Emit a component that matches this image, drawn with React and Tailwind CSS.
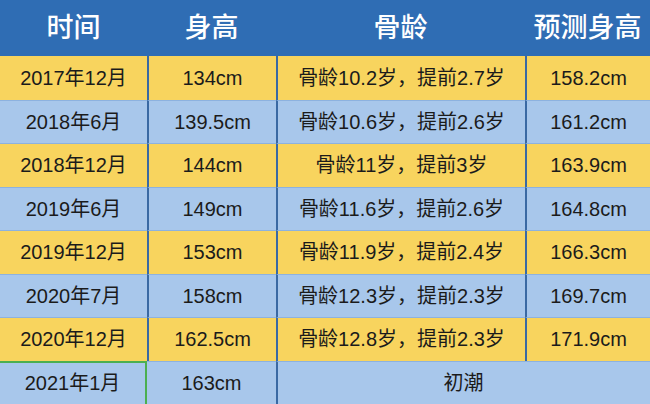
import React from "react";

const rows = [
  ["2017年12月", "134cm", "骨龄10.2岁，提前2.7岁", "158.2cm"],
  ["2018年6月", "139.5cm", "骨龄10.6岁，提前2.6岁", "161.2cm"],
  ["2018年12月", "144cm", "骨龄11岁，提前3岁", "163.9cm"],
  ["2019年6月", "149cm", "骨龄11.6岁，提前2.6岁", "164.8cm"],
  ["2019年12月", "153cm", "骨龄11.9岁，提前2.4岁", "166.3cm"],
  ["2020年7月", "158cm", "骨龄12.3岁，提前2.3岁", "169.7cm"],
  ["2020年12月", "162.5cm", "骨龄12.8岁，提前2.3岁", "171.9cm"],
];

const headers = ["时间", "身高", "骨龄", "预测身高"];

export default function App() {
  return (
    <div
      className="w-[650px] h-[404px] overflow-hidden bg-[#a8c7eb] text-[#1b1b1b]"
      style={{ fontFamily: '"Liberation Sans", "Noto Sans CJK SC", sans-serif' }}
    >
      <div className="grid grid-cols-[147px_129px_249px_125px]">
        {headers.map((h) => (
          <div
            key={h}
            className="h-[56px] bg-[#2f6db4] text-white text-[27px] font-medium flex items-center justify-center"
          >
            {h}
          </div>
        ))}

        {rows.map((r, i) => {
          const bg = i % 2 === 0 ? "bg-[#f8d45e]" : "bg-[#a8c7eb]";
          const top = i === 0 ? "" : "border-t border-[#8db2df]";
          return r.map((c, j) => (
            <div
              key={i + "-" + j}
              className={`h-[43.5px] ${bg} ${top} ${j > 0 ? "border-l-2 border-l-[#3a69a3]" : ""} text-[20px] flex items-center justify-center`}
            >
              {c}
            </div>
          ));
        })}

        <div className="h-[43.5px] border-t-2 border-t-[#4caf50] border-r-2 border-r-[#4caf50] text-[20px] flex items-center justify-center">
          2021年1月
        </div>
        <div className="h-[43.5px] border-t border-[#8db2df] text-[20px] flex items-center justify-center">
          163cm
        </div>
        <div className="col-span-2 h-[43.5px] border-t border-[#8db2df] border-l-2 border-l-[#3a69a3] text-[20px] flex items-center justify-center pr-[1px]">
          初潮
        </div>
      </div>
    </div>
  );
}
